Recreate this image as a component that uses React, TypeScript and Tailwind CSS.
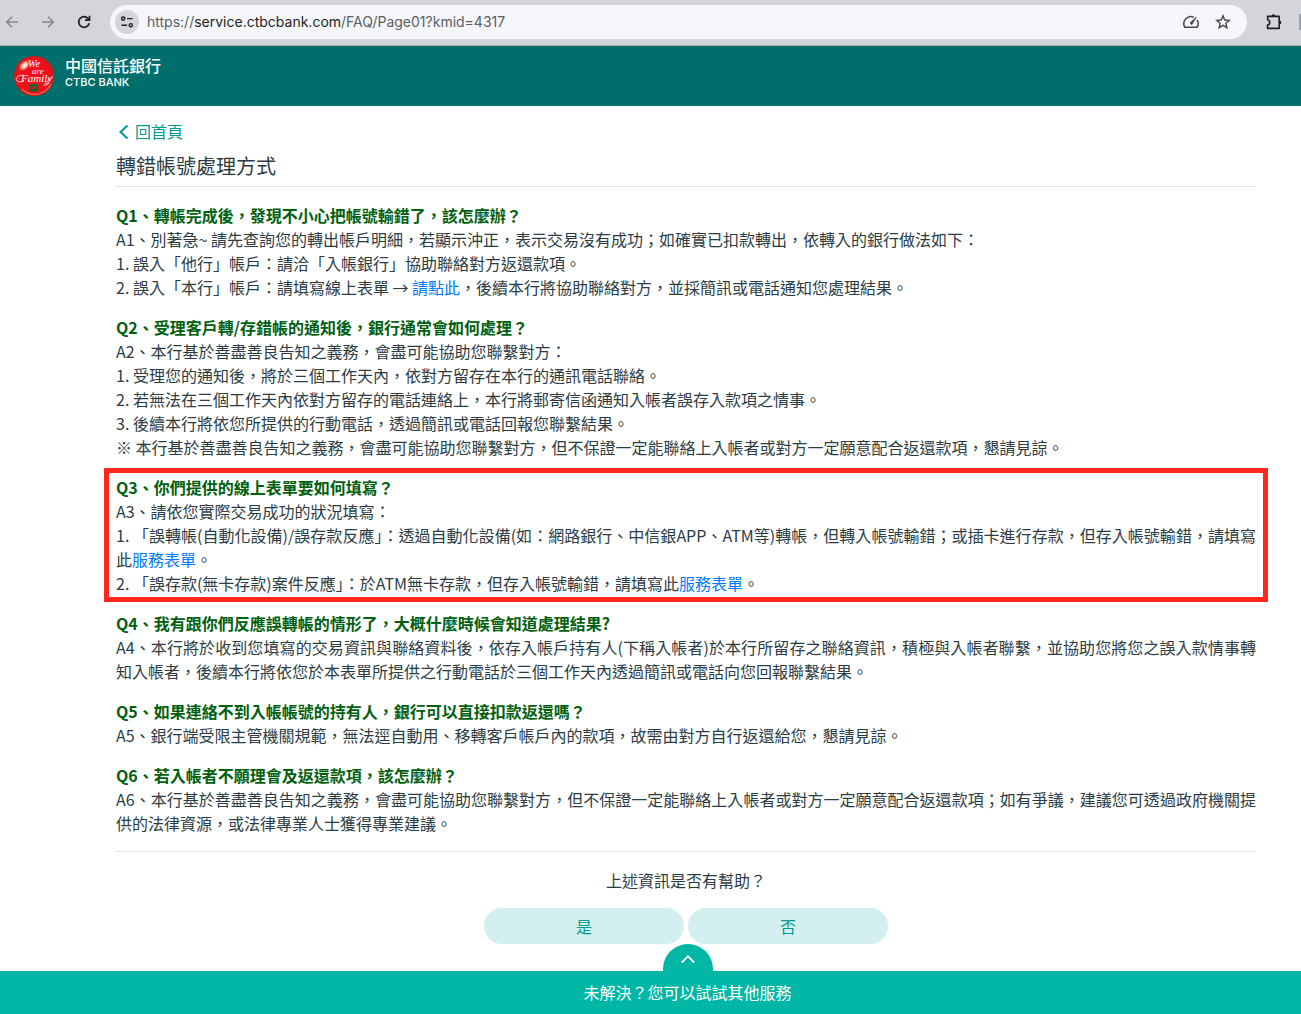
import React from "react";

function BrowserBar() {
  return (
    <div className="flex h-[46px] items-center border-b border-[#a5a9ab] bg-[#d4d5da] pb-px text-[#1f1f1f]">
      <button aria-label="上一頁" className="ml-1 flex size-4 items-center justify-center text-[#84868b]">
        <svg width="16" height="16" viewBox="0 0 16 16" fill="none" stroke="currentColor" strokeWidth="1.5">
          <path d="M14 8H3M8 2.7L2.7 8L8 13.3" />
        </svg>
      </button>
      <button aria-label="下一頁" className="ml-5 flex size-4 items-center justify-center text-[#84868b]">
        <svg width="16" height="16" viewBox="0 0 16 16" fill="none" stroke="currentColor" strokeWidth="1.5">
          <path d="M2 8H13M8 2.7L13.3 8L8 13.3" />
        </svg>
      </button>
      <button aria-label="重新載入" className="ml-5 flex size-4 items-center justify-center">
        <svg width="16" height="16" viewBox="0 0 16 16" fill="none" stroke="currentColor" strokeWidth="1.7">
          <path d="M13.2 9.2A5.3 5.3 0 1 1 12 4.5L13.2 5.8" />
          <path d="M13.5 1.8V6.2H9" />
        </svg>
      </button>
      <div className="ml-[18px] flex h-[34px] min-w-0 flex-1 items-center rounded-full bg-[#f5f6f9] pr-4 pl-[5px]">
        <button aria-label="檢視網站資訊" className="flex size-6 shrink-0 items-center justify-center rounded-full bg-[#d4d5da]">
          <svg width="14" height="14" viewBox="0 0 14 14" fill="none" stroke="currentColor" strokeWidth="1.4">
            <circle cx="3.2" cy="3.6" r="1.6" />
            <path d="M7 3.6H12.5M1.5 10.2H7" />
            <circle cx="10.8" cy="10.2" r="1.6" />
          </svg>
        </button>
        <div className="ml-2 min-w-0 flex-1 truncate font-['Inter','Liberation_Sans',sans-serif] text-sm text-[#5b5e63]">
          https://<span className="text-[#1f1f1f]">service.ctbcbank.com</span>/FAQ/Page01?kmid=4317
        </div>
        <button aria-label="效能" className="flex size-4 items-center justify-center text-[#47494d]">
          <svg width="18" height="16" viewBox="0 0 18 16" className="shrink-0" fill="none" stroke="currentColor" strokeWidth="1.5">
            <path d="M11.8 3.2A7 7 0 0 0 2.9 13.2H15.1A7 7 0 0 0 15 5.8" />
            <path d="M14.2 3.2L8 9L9.8 10.6Z" fill="currentColor" strokeWidth="0.8" />
          </svg>
        </button>
        <button aria-label="加入書籤" className="ml-4 flex size-4 items-center justify-center text-[#47494d]">
          <svg width="16" height="16" viewBox="0 0 16 16" fill="none" stroke="currentColor" strokeWidth="1.4">
            <path d="M8 1.8L9.7 6L14.3 6.3L10.8 9.2L11.9 13.7L8 11.3L4.1 13.7L5.2 9.2L1.7 6.3L6.3 6Z" />
          </svg>
        </button>
      </div>
      <button aria-label="擴充功能" className="ml-[18px] flex size-[18px] items-center justify-center">
        <svg width="18" height="18" viewBox="0 0 18 18" fill="none" stroke="currentColor" strokeWidth="1.6">
          <path d="M2.6 3.4H14.2V15.4H2.6V12C5.4 11.4 5.4 7.4 2.6 6.8Z" strokeLinejoin="round" />
          <path d="M6.6 3.2A1.9 1.9 0 0 1 10.4 3.2ZM14.4 7.6A1.9 1.9 0 0 1 14.4 11.4Z" fill="currentColor" stroke="none" />
        </svg>
      </button>
      <div className="ml-4 h-4 w-0.5 bg-[#9aa0ad]" />
    </div>
  );
}

function BankLogo() {
  return (
    <svg width="40" height="40" viewBox="0 0 40 40" aria-hidden="true">
      <defs>
        <radialGradient id="ball" cx="0.5" cy="0.5" r="0.5">
          <stop offset="0.8" stopColor="#f0101c" />
          <stop offset="1" stopColor="#d8131b" />
        </radialGradient>
        <radialGradient id="shine" cx="0.5" cy="0.5" r="0.5">
          <stop offset="0" stopColor="#fff3e6" />
          <stop offset="0.4" stopColor="#ffc9b0" />
          <stop offset="1" stopColor="#f0101c" stopOpacity="0" />
        </radialGradient>
      </defs>
      <circle cx="20" cy="20" r="20" fill="url(#ball)" />
      <path d="M8 33A18 18 0 0 0 37 28" fill="none" stroke="#f4643c" strokeWidth="1.4" />
      <ellipse cx="10.5" cy="9.5" rx="8" ry="5" fill="url(#shine)" transform="rotate(-42 10.5 9.5)" />
      <g fill="#fff" fontFamily="'Liberation Serif', serif" fontStyle="italic">
        <text x="14" y="11" fontSize="10">We</text>
        <text x="18" y="17.5" fontSize="9">are</text>
        <text x="7" y="26" fontSize="11">Family</text>
      </g>
      <path d="M9 19C3 19.5 0.8 23 3 25C5 26.5 8.5 26 10 24M35 27C31 31 28 29.5 32 26.5L39 20" fill="none" stroke="#fff" strokeWidth="0.7" />
      <path d="M15.5 28H24V35.5H15.5Z" fill="#0b6b2f" />
      <path d="M17.5 30.3H22V33H17.5Z" fill="#d8131b" />
    </svg>
  );
}

function FormLink({ children }: { children: React.ReactNode }) {
  return (
    <a href="#form" className="text-[#007bff]">
      {children}
    </a>
  );
}

function Faq({
  title,
  highlighted = false,
  children,
}: {
  title: string;
  highlighted?: boolean;
  children: React.ReactNode;
}) {
  return (
    <section className="relative text-justify">
      {highlighted && (
        <div className="pointer-events-none absolute -inset-x-3 -inset-y-[7px] border-5 border-[#ff261c]" />
      )}
      <h2 className="font-bold text-[#006010]">{title}</h2>
      {children}
    </section>
  );
}

export default function App() {
  return (
    <div
      lang="zh-TW"
      className="flex min-h-screen flex-col bg-white font-['Noto_Sans_CJK_TC',sans-serif] text-base leading-6 text-[#2c3c44]"
    >
      <BrowserBar />
      <header className="flex h-[60px] items-center bg-[#006f6b] pl-3.5 text-white">
        <a href="#home" className="flex items-center gap-[11px]">
          <BankLogo />
          <span className="flex flex-col pb-1.5">
            <span className="text-base leading-[18px] font-medium">中國信託銀行</span>
            <span className="font-['Inter',sans-serif] text-[11px] leading-4 font-medium">CTBC BANK</span>
          </span>
        </a>
      </header>

      <main className="pt-[13px] pr-[45px] pl-[116px]">
        <a href="#faq" className="flex h-6 w-fit items-center gap-1 text-[#009a92]">
          <svg width="15" height="16" viewBox="0 0 15 16" className="mt-0.5" fill="none" stroke="currentColor" strokeWidth="2">
            <path d="M11.5 1.5L4.5 8L11.5 14.5" />
          </svg>
          回首頁
        </a>
        <h1 className="border-b border-[#dee2e6] pt-2 pb-[5px] text-xl leading-[30px]">轉錯帳號處理方式</h1>

        <div className="flex flex-col gap-4 border-b border-[#dee2e6] py-4">
          <Faq title="Q1、轉帳完成後，發現不小心把帳號輸錯了，該怎麼辦？">
            <p>A1、別著急~ 請先查詢您的轉出帳戶明細，若顯示沖正，表示交易沒有成功；如確實已扣款轉出，依轉入的銀行做法如下：</p>
            <p>1. 誤入「他行」帳戶：請洽「入帳銀行」協助聯絡對方返還款項。</p>
            <p>
              2. 誤入「本行」帳戶：請填寫線上表單 → <FormLink>請點此</FormLink>，後續本行將協助聯絡對方，並採簡訊或電話通知您處理結果。
            </p>
          </Faq>
          <Faq title="Q2、受理客戶轉/存錯帳的通知後，銀行通常會如何處理？">
            <p>A2、本行基於善盡善良告知之義務，會盡可能協助您聯繫對方：</p>
            <p>1. 受理您的通知後，將於三個工作天內，依對方留存在本行的通訊電話聯絡。</p>
            <p>2. 若無法在三個工作天內依對方留存的電話連絡上，本行將郵寄信函通知入帳者誤存入款項之情事。</p>
            <p>3. 後續本行將依您所提供的行動電話，透過簡訊或電話回報您聯繫結果。</p>
            <p>※ 本行基於善盡善良告知之義務，會盡可能協助您聯繫對方，但不保證一定能聯絡上入帳者或對方一定願意配合返還款項，懇請見諒。</p>
          </Faq>
          <Faq title="Q3、你們提供的線上表單要如何填寫？" highlighted>
            <p>A3、請依您實際交易成功的狀況填寫：</p>
            <p>
              1. 「誤轉帳(自動化設備)/誤存款反應」：透過自動化設備(如：網路銀行、中信銀APP、ATM等)轉帳，但轉入帳號輸錯；或插卡進行存款，但存入帳號輸錯，請填寫此<FormLink>服務表單</FormLink>。
            </p>
            <p>
              2. 「誤存款(無卡存款)案件反應」：於ATM無卡存款，但存入帳號輸錯，請填寫此<FormLink>服務表單</FormLink>。
            </p>
          </Faq>
          <Faq title="Q4、我有跟你們反應誤轉帳的情形了，大概什麼時候會知道處理結果?">
            <p>A4、本行將於收到您填寫的交易資訊與聯絡資料後，依存入帳戶持有人(下稱入帳者)於本行所留存之聯絡資訊，積極與入帳者聯繫，並協助您將您之誤入款情事轉知入帳者，後續本行將依您於本表單所提供之行動電話於三個工作天內透過簡訊或電話向您回報聯繫結果。</p>
          </Faq>
          <Faq title="Q5、如果連絡不到入帳帳號的持有人，銀行可以直接扣款返還嗎？">
            <p>A5、銀行端受限主管機關規範，無法逕自動用、移轉客戶帳戶內的款項，故需由對方自行返還給您，懇請見諒。</p>
          </Faq>
          <Faq title="Q6、若入帳者不願理會及返還款項，該怎麼辦？">
            <p>A6、本行基於善盡善良告知之義務，會盡可能協助您聯繫對方，但不保證一定能聯絡上入帳者或對方一定願意配合返還款項；如有爭議，建議您可透過政府機關提供的法律資源，或法律專業人士獲得專業建議。</p>
          </Faq>
        </div>

        <p className="mt-4 text-center">上述資訊是否有幫助？</p>
        <div className="mt-4 flex justify-center gap-1">
          <button className="h-9 w-[200px] rounded-full bg-[#d4efef] text-[#009a92]">是</button>
          <button className="h-9 w-[200px] rounded-full bg-[#d4efef] text-[#009a92]">否</button>
        </div>
      </main>

      <footer className="mt-auto flex flex-col items-center">
        <div className="flex w-full justify-center pl-[74px]">
          <button aria-label="展開其他服務" className="flex h-[27px] w-[50px] justify-center rounded-t-full bg-[#00b7a5] pt-2.5 text-white">
            <svg width="16" height="10" viewBox="0 0 16 10" fill="none" stroke="currentColor" strokeWidth="1.8">
              <path d="M1.8 8.5L8 2.2L14.2 8.5" />
            </svg>
          </button>
        </div>
        <div className="flex h-[43px] w-full items-center justify-center bg-[#00b7a5] pb-0.5 pl-[74px] text-white">
          未解決？您可以試試其他服務
        </div>
      </footer>
    </div>
  );
}
